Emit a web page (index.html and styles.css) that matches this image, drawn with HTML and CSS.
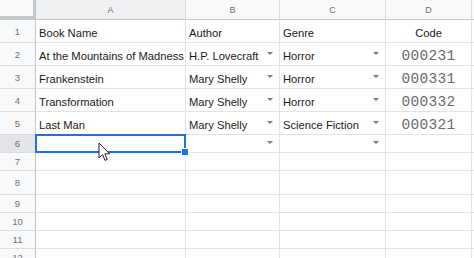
FILE: index.html
```html
<!DOCTYPE html>
<html>
<head>
<meta charset="utf-8">
<link rel="stylesheet" href="styles.css">
</head>
<body>
<div class="sheet">
  <div class="corner"></div>
  <div class="colhead active">A</div>
  <div class="colhead">B</div>
  <div class="colhead">C</div>
  <div class="colhead">D</div>
  <div class="colhead"></div>

  <div class="rowhead">1</div>
  <div class="cell">Book Name</div>
  <div class="cell">Author</div>
  <div class="cell">Genre</div>
  <div class="cell code head">Code</div>
  <div class="cell"></div>

  <div class="rowhead">2</div>
  <div class="cell">At the Mountains of Madness</div>
  <div class="cell dd"><span>H.P. Lovecraft</span><i class="arrow"></i></div>
  <div class="cell dd"><span>Horror</span><i class="arrow"></i></div>
  <div class="cell code">000231</div>
  <div class="cell"></div>

  <div class="rowhead">3</div>
  <div class="cell">Frankenstein</div>
  <div class="cell dd"><span>Mary Shelly</span><i class="arrow"></i></div>
  <div class="cell dd"><span>Horror</span><i class="arrow"></i></div>
  <div class="cell code">000331</div>
  <div class="cell"></div>

  <div class="rowhead">4</div>
  <div class="cell">Transformation</div>
  <div class="cell dd"><span>Mary Shelly</span><i class="arrow"></i></div>
  <div class="cell dd"><span>Horror</span><i class="arrow"></i></div>
  <div class="cell code">000332</div>
  <div class="cell"></div>

  <div class="rowhead">5</div>
  <div class="cell">Last Man</div>
  <div class="cell dd"><span>Mary Shelly</span><i class="arrow"></i></div>
  <div class="cell dd"><span>Science Fiction</span><i class="arrow"></i></div>
  <div class="cell code">000321</div>
  <div class="cell"></div>

  <div class="rowhead active">6</div>
  <div class="cell selected"><div class="selbox"><div class="handle"></div></div></div>
  <div class="cell dd"><span></span><i class="arrow"></i></div>
  <div class="cell dd"><span></span><i class="arrow"></i></div>
  <div class="cell"></div>
  <div class="cell"></div>

  <div class="rowhead">7</div>
  <div class="cell"></div><div class="cell"></div><div class="cell"></div><div class="cell"></div><div class="cell"></div>

  <div class="rowhead">8</div>
  <div class="cell"></div><div class="cell"></div><div class="cell"></div><div class="cell"></div><div class="cell"></div>

  <div class="rowhead">9</div>
  <div class="cell"></div><div class="cell"></div><div class="cell"></div><div class="cell"></div><div class="cell"></div>

  <div class="rowhead">10</div>
  <div class="cell"></div><div class="cell"></div><div class="cell"></div><div class="cell"></div><div class="cell"></div>

  <div class="rowhead">11</div>
  <div class="cell"></div><div class="cell"></div><div class="cell"></div><div class="cell"></div><div class="cell"></div>

  <div class="rowhead">12</div>
  <div class="cell"></div><div class="cell"></div><div class="cell"></div><div class="cell"></div><div class="cell"></div>

  <svg class="cursor" width="13" height="20" viewBox="0 0 13 20">
    <path d="M1 1 V16 L4.6 12.6 L7 18.4 L9.2 17.4 L6.8 11.8 H11.6 Z" fill="#fff" stroke="#222" stroke-width="1" stroke-linejoin="round"/>
  </svg>
</div>
</body>
</html>
```

FILE: styles.css
```css
html, body {
  margin: 0;
  padding: 0;
  background: #fff;
  overflow: hidden;
}

.sheet {
  position: relative;
  display: grid;
  grid-template-columns: 36px 150px 94px 106px 86px 1fr;
  grid-template-rows: 20px 23px 23px 23px 23px 23px 18px 18px 24px 18px 18px 18px 18px;
  width: 474px;
  height: 258px;
  overflow: hidden;
  font-family: "Liberation Sans", Arial, sans-serif;
  font-size: 11.2px;
  color: #1a1a1a;
}

.corner {
  background: #f8f9fa;
  border-right: 3px solid #c4c7ca;
  border-bottom: 4px solid #c4c7ca;
}

.colhead {
  background: #f8f9fa;
  border-right: 1px solid #dadcde;
  border-bottom: 1px solid #c4c7ca;
  display: flex;
  align-items: center;
  justify-content: center;
  font-size: 9px;
  color: #6e7175;
}

.colhead.active {
  background: #eef0f2;
}

.rowhead {
  background: #f8f9fa;
  border-right: 1px solid #c4c7ca;
  border-bottom: 1px solid #dadcde;
  display: flex;
  align-items: center;
  justify-content: center;
  font-size: 9.5px;
  color: #6e7175;
}

.rowhead.active {
  background: #e3e5e8;
}

.cell {
  position: relative;
  border-right: 1px solid #e2e3e3;
  border-bottom: 1px solid #e2e3e3;
  display: flex;
  align-items: flex-end;
  padding: 0 0 2px 3px;
  line-height: 13px;
  white-space: nowrap;
  overflow: visible;
}

.dd {
  justify-content: space-between;
}

.arrow {
  align-self: center;
  width: 0;
  height: 0;
  border-left: 3px solid transparent;
  border-right: 3px solid transparent;
  border-top: 3px solid #7a7a7a;
  margin-right: 6px;
}

.code {
  justify-content: center;
  padding-left: 0;
  font-family: "Liberation Mono", "Courier New", monospace;
  font-size: 14.5px;
  letter-spacing: 0.3px;
  color: #6a6a6a;
  padding-bottom: 2px;
}

.code.head {
  font-family: "Liberation Sans", Arial, sans-serif;
  font-size: 11.2px;
  letter-spacing: 0;
  color: #1a1a1a;
}

.selbox {
  position: absolute;
  top: -1px;
  left: -1px;
  right: -1px;
  bottom: -1px;
  border: 2px solid #1a73e8;
  z-index: 2;
}

.handle {
  position: absolute;
  right: -5px;
  bottom: -5px;
  width: 6px;
  height: 6px;
  background: #1a73e8;
  border: 1px solid #fff;
}

.cursor {
  position: absolute;
  left: 98px;
  top: 142px;
  z-index: 3;
}
```
